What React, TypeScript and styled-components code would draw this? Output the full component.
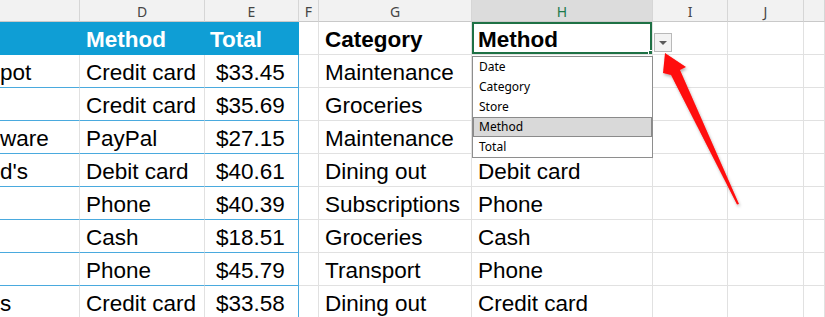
import { Fragment } from "react";
import styled, { createGlobalStyle } from "styled-components";

const GlobalStyle = createGlobalStyle`
  html, body {
    margin: 0;
    padding: 0;
    background: #ffffff;
  }
`;

const COLS = ["C", "D", "E", "F", "G", "H", "I", "J", "K"];
const TABLE_BLUE = "#0f9ed5";
const TABLE_LINE = "#4aaade";
const GRID_LINE = "#e1e1e1";

type CellKind = "head" | "tableHead" | "table" | "tableEnd" | "sheet";

const Sheet = styled.div`
  position: relative;
  width: 825px;
  height: 317px;
  overflow: hidden;
  display: grid;
  grid-template-columns: 80px 125px 94px 20px 153px 181px 75px 76px 1fr;
  grid-template-rows: 22px repeat(9, 33px);
  font-family: "Liberation Sans", Arial, sans-serif;
`;

const ColHead = styled.div<{ $active?: boolean }>`
  box-sizing: border-box;
  display: flex;
  align-items: center;
  justify-content: center;
  background: ${(p) => (p.$active ? "#dcdcdc" : "#f2f2f2")};
  border-right: 1px solid #d6d6d6;
  border-bottom: 1px solid #c9c9c9;
  color: ${(p) => (p.$active ? "#1d7a4b" : "#454545")};
  font-family: "Noto Sans", "Open Sans", sans-serif;
  font-size: 14px;
  padding-top: 1px;
`;

const Cell = styled.div<{ $kind: CellKind; $bold?: boolean; $pad?: number }>`
  box-sizing: border-box;
  overflow: hidden;
  white-space: nowrap;
  font-size: 22.5px;
  line-height: 28px;
  padding-top: 4px;
  padding-left: ${(p) => p.$pad ?? 6}px;
  font-weight: ${(p) => (p.$bold ? 700 : 400)};
  color: ${(p) => (p.$kind === "tableHead" ? "#ffffff" : "#000000")};
  background: ${(p) => (p.$kind === "tableHead" ? TABLE_BLUE : "#ffffff")};
  border-bottom: 1px solid
    ${(p) =>
      p.$kind === "sheet" ? GRID_LINE : p.$kind === "tableHead" ? TABLE_BLUE : TABLE_LINE};
  border-right: 1px solid
    ${(p) =>
      p.$kind === "tableEnd"
        ? TABLE_LINE
        : p.$kind === "tableHead"
        ? TABLE_BLUE
        : GRID_LINE};
`;

const SelectedCell = styled(Cell)`
  box-shadow: inset 0 0 0 2px #1e7145;
  position: relative;
`;

const FillHandle = styled.span`
  position: absolute;
  right: -1px;
  bottom: -1px;
  width: 5px;
  height: 5px;
  background: #1e7145;
  border: 1px solid #ffffff;
  box-sizing: border-box;
`;

const DropButton = styled.div`
  position: absolute;
  left: 654px;
  top: 33px;
  width: 18px;
  height: 19px;
  box-sizing: border-box;
  background: #f3f3f3;
  border: 1px solid #b9b9b9;
  display: flex;
  align-items: center;
  justify-content: center;
`;

const Caret = styled.span`
  width: 0;
  height: 0;
  border-left: 4px solid transparent;
  border-right: 4px solid transparent;
  border-top: 4px solid #5a5a5a;
`;

const ListBox = styled.div`
  position: absolute;
  left: 472px;
  top: 56px;
  width: 181px;
  box-sizing: border-box;
  background: #ffffff;
  border: 1px solid #8e8e8e;
  display: flex;
  flex-direction: column;
  font-family: "Noto Sans", "Open Sans", sans-serif;
  font-size: 12px;
  color: #000000;
`;

const ListItem = styled.div<{ $active?: boolean }>`
  box-sizing: border-box;
  height: 20px;
  line-height: 18px;
  padding-left: 5px;
  background: ${(p) => (p.$active ? "#d9d9d9" : "transparent")};
  border: 1px solid ${(p) => (p.$active ? "#8a8a8a" : "transparent")};
`;

const Overlay = styled.svg`
  position: absolute;
  left: 0;
  top: 0;
  pointer-events: none;
`;

type Row = [string, string, string, string, string];

// H column values under the open list are hidden by it
const ROWS: Row[] = [
  ["pot", "Credit card", "$33.45", "Maintenance", ""],
  ["", "Credit card", "$35.69", "Groceries", ""],
  ["ware", "PayPal", "$27.15", "Maintenance", ""],
  ["d's", "Debit card", "$40.61", "Dining out", "Debit card"],
  ["", "Phone", "$40.39", "Subscriptions", "Phone"],
  ["", "Cash", "$18.51", "Groceries", "Cash"],
  ["", "Phone", "$45.79", "Transport", "Phone"],
  ["s", "Credit card", "$33.58", "Dining out", "Credit card"],
];

const OPTIONS = ["Date", "Category", "Store", "Method", "Total"];

const App = () => {
  return (
    <>
      <GlobalStyle />
      <Sheet>
        {COLS.map((c) => (
          <ColHead key={c} $active={c === "H"}>
            {c === "C" || c === "K" ? "" : c}
          </ColHead>
        ))}

        <Cell $kind="tableHead" />
        <Cell $kind="tableHead" $bold>
          Method
        </Cell>
        <Cell $kind="tableHead" $bold $pad={5}>
          Total
        </Cell>
        <Cell $kind="sheet" />
        <Cell $kind="sheet" $bold>
          Category
        </Cell>
        <SelectedCell $kind="sheet" $bold>
          Method
          <FillHandle />
        </SelectedCell>
        <Cell $kind="sheet" />
        <Cell $kind="sheet" />
        <Cell $kind="sheet" />

        {ROWS.map((r, i) => (
          <Fragment key={i}>
            <Cell $kind="table" $pad={0}>
              {r[0]}
            </Cell>
            <Cell $kind="table">{r[1]}</Cell>
            <Cell $kind="tableEnd" $pad={11}>
              {r[2]}
            </Cell>
            <Cell $kind="sheet" />
            <Cell $kind="sheet">{r[3]}</Cell>
            <Cell $kind="sheet">{r[4]}</Cell>
            <Cell $kind="sheet" />
            <Cell $kind="sheet" />
            <Cell $kind="sheet" />
          </Fragment>
        ))}

        <DropButton>
          <Caret />
        </DropButton>

        <ListBox>
          {OPTIONS.map((o) => (
            <ListItem key={o} $active={o === "Method"}>
              {o}
            </ListItem>
          ))}
        </ListBox>

        <Overlay width="825" height="317" viewBox="0 0 825 317">
          <defs>
            <filter id="shadow" x="-20%" y="-20%" width="140%" height="140%">
              <feDropShadow dx="1" dy="2" stdDeviation="1.5" floodColor="#000" floodOpacity="0.3" />
            </filter>
          </defs>
          <polygon
            points="665,53 686,67 680,70 739,204 737,204.5 671,75 663,73"
            fill="#ff0a0a"
            filter="url(#shadow)"
          />
        </Overlay>
      </Sheet>
    </>
  );
};

export default App;
